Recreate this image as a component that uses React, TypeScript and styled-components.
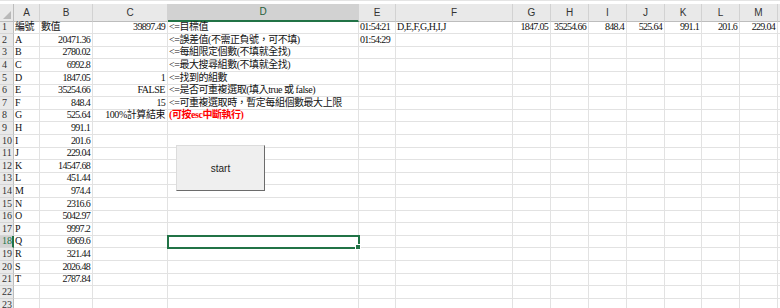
import styled, { createGlobalStyle, css } from "styled-components";

const GlobalStyle = createGlobalStyle`
  html, body {
    margin: 0;
    padding: 0;
    background: #fff;
  }
  body {
    width: 780px;
    height: 308px;
    overflow: hidden;
  }
`;

const COLUMNS: { id: string; w: number }[] = [
  { id: "A", w: 26 },
  { id: "B", w: 53 },
  { id: "C", w: 75 },
  { id: "D", w: 191 },
  { id: "E", w: 37 },
  { id: "F", w: 117 },
  { id: "G", w: 38 },
  { id: "H", w: 38 },
  { id: "I", w: 38 },
  { id: "J", w: 38 },
  { id: "K", w: 37 },
  { id: "L", w: 38 },
  { id: "M", w: 38 },
  { id: "N", w: 40 },
];

const ROW_COUNT = 23;
const ROW_H = 12.62;
const ACTIVE = { col: "D", row: 18 };

const values: Record<string, string> = {
  A1: "編號",
  B1: "數值",
  C1: "39897.49",
  D1: "<=目標值",
  E1: "01:54:21",
  F1: "D,E,F,G,H,I,J",
  G1: "1847.05",
  H1: "35254.66",
  I1: "848.4",
  J1: "525.64",
  K1: "991.1",
  L1: "201.6",
  M1: "229.04",
  D2: "<=誤差值(不需正負號，可不填)",
  E2: "01:54:29",
  D3: "<=每組限定個數(不填就全找)",
  D4: "<=最大搜尋組數(不填就全找)",
  C5: "1",
  D5: "<=找到的組數",
  C6: "FALSE",
  D6: "<=是否可重複選取(填入true 或 false)",
  C7: "15",
  D7: "<=可重複選取時，暫定每組個數最大上限",
  C8: "100%計算結束",
  D8: "(可按esc中斷執行)",
};

const items: [string, string][] = [
  ["A", "20471.36"],
  ["B", "2780.02"],
  ["C", "6992.8"],
  ["D", "1847.05"],
  ["E", "35254.66"],
  ["F", "848.4"],
  ["G", "525.64"],
  ["H", "991.1"],
  ["I", "201.6"],
  ["J", "229.04"],
  ["K", "14547.68"],
  ["L", "451.44"],
  ["M", "974.4"],
  ["N", "2316.6"],
  ["O", "5042.97"],
  ["P", "9997.2"],
  ["Q", "6969.6"],
  ["R", "321.44"],
  ["S", "2026.48"],
  ["T", "2787.84"],
];
items.forEach(([name, num], i) => {
  values[`A${i + 2}`] = name;
  values[`B${i + 2}`] = num;
});

const redCells = new Set(["D8"]);

const isNumeric = (v: string) => /^[\d.:]+$/.test(v);

const alignFor = (col: string, v: string) => {
  if (col === "C") return "right";
  return /^[\d.]+$/.test(v) ? "right" : "left";
};

const Sheet = styled.div`
  position: relative;
  width: 780px;
  height: 308px;
  overflow: hidden;
  background: #fff;
`;

const TopStrip = styled.div`
  height: 4px;
  background: #fff;
  border-top: 1px solid #e4e4e4;
  box-sizing: border-box;
`;

const Grid = styled.div`
  display: grid;
  grid-template-columns: 14px ${COLUMNS.map((c) => `${c.w}px`).join(" ")};
  grid-template-rows: 17.5px repeat(${ROW_COUNT}, ${ROW_H}px);
`;

const Corner = styled.div`
  position: relative;
  background: #e9e9e9;
  border-right: 1px solid #bdbdbd;
  border-bottom: 1px solid #bdbdbd;
  box-sizing: border-box;

  &::after {
    content: "";
    position: absolute;
    right: 2px;
    bottom: 2px;
    border-style: solid;
    border-width: 0 0 8px 8px;
    border-color: transparent transparent #b9b9b9 transparent;
  }
`;

const ColHead = styled.div<{ $active?: boolean }>`
  display: flex;
  align-items: center;
  justify-content: center;
  background: #e9e9e9;
  border-right: 1px solid #d2d2d2;
  border-bottom: 1px solid #bdbdbd;
  box-sizing: border-box;
  font-family: "Liberation Sans", Arial, sans-serif;
  font-size: 10px;
  color: #333;

  ${(p) =>
    p.$active &&
    css`
      background: #d2d2d2;
      border-bottom: 2px solid #217346;
      color: #1f5f3a;
    `}
`;

const RowHead = styled.div<{ $active?: boolean }>`
  display: flex;
  align-items: flex-end;
  background: #e9e9e9;
  border-right: 1px solid #bdbdbd;
  border-bottom: 1px solid #d6d6d6;
  box-sizing: border-box;
  padding-left: 2px;
  font-family: "Liberation Serif", serif;
  font-size: 10px;
  line-height: 12px;
  color: #333;
  white-space: nowrap;

  ${(p) =>
    p.$active &&
    css`
      background: #d2d2d2;
      border-right: 2px solid #217346;
      color: #217346;
    `}
`;

const Cell = styled.div<{
  $align: string;
  $red?: boolean;
  $numeric?: boolean;
  $selected?: boolean;
}>`
  position: relative;
  display: flex;
  align-items: flex-end;
  justify-content: ${(p) => (p.$align === "right" ? "flex-end" : "flex-start")};
  border-right: 1px solid #e2e2e2;
  border-bottom: 1px solid #e2e2e2;
  box-sizing: border-box;
  padding: 0 2px 0 1px;
  font-family: "Liberation Serif", "Noto Sans CJK TC", serif;
  font-size: 10px;
  line-height: 12px;
  color: #111;
  white-space: nowrap;
  letter-spacing: ${(p) => (p.$numeric ? "-0.7px" : "-0.45px")};

  ${(p) =>
    p.$red &&
    css`
      color: #ff0000;
      font-weight: bold;
    `}

  ${(p) =>
    p.$selected &&
    css`
      z-index: 2;
      outline: 2px solid #217346;
      outline-offset: -1px;

      &::after {
        content: "";
        position: absolute;
        right: -3px;
        bottom: -3px;
        width: 4px;
        height: 4px;
        background: #217346;
        border: 1px solid #fff;
      }
    `}
`;

const StartButton = styled.button`
  position: absolute;
  left: 176px;
  top: 145px;
  width: 89px;
  height: 46px;
  padding: 0;
  background: #efefef;
  border: 1px solid;
  border-color: #dcdcdc #6b6b6b #6b6b6b #dcdcdc;
  font-family: "Liberation Sans", Arial, sans-serif;
  font-size: 10px;
  color: #222;
  cursor: pointer;
`;

export default function App() {
  const rows = Array.from({ length: ROW_COUNT }, (_, i) => i + 1);
  return (
    <Sheet>
      <GlobalStyle />
      <TopStrip />
      <Grid>
        <Corner />
        {COLUMNS.map((c) => (
          <ColHead key={c.id} $active={c.id === ACTIVE.col}>
            {c.id}
          </ColHead>
        ))}
        {rows.map((r) => [
          <RowHead key={`h${r}`} $active={r === ACTIVE.row}>
            {r}
          </RowHead>,
          ...COLUMNS.map((c) => {
            const key = `${c.id}${r}`;
            const v = values[key] ?? "";
            return (
              <Cell
                key={key}
                $align={alignFor(c.id, v)}
                $numeric={isNumeric(v)}
                $red={redCells.has(key)}
                $selected={c.id === ACTIVE.col && r === ACTIVE.row}
              >
                {v}
              </Cell>
            );
          }),
        ])}
      </Grid>
      <StartButton type="button">start</StartButton>
    </Sheet>
  );
}
